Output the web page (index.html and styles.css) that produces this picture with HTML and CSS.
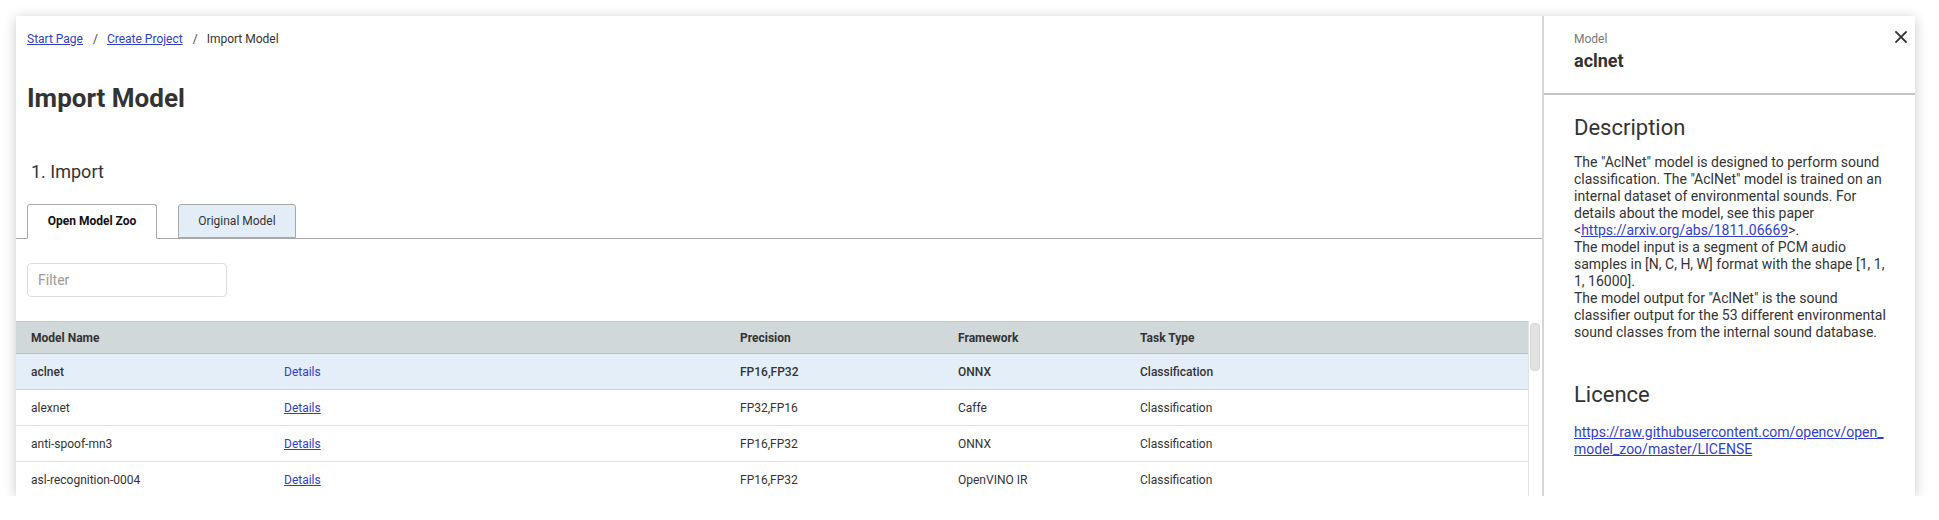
FILE: index.html
```html
<!DOCTYPE html>
<html lang="en">
<head>
<meta charset="utf-8">
<title>Import Model</title>
<link rel="stylesheet" href="styles.css">
</head>
<body>
<div class="card">
  <main class="main">
    <nav class="crumbs">
      <a href="#" class="link">Start Page</a><span class="sep">/</span><a href="#" class="link">Create Project</a><span class="sep">/</span><span class="current">Import Model</span>
    </nav>
    <h1 class="title">Import Model</h1>
    <h2 class="step">1. Import</h2>
    <div class="tabs">
      <div class="tab tab-active">Open Model Zoo</div>
      <div class="tab tab-inactive">Original Model</div>
    </div>
    <div class="filter-row">
      <input class="filter" type="text" placeholder="Filter">
    </div>
    <div class="table-wrap">
      <table class="models">
        <colgroup>
          <col class="c-name"><col class="c-details"><col class="c-prec"><col class="c-fw"><col class="c-task">
        </colgroup>
        <thead>
          <tr><th>Model Name</th><th></th><th>Precision</th><th>Framework</th><th>Task Type</th></tr>
        </thead>
        <tbody>
          <tr class="selected"><td>aclnet</td><td><a href="#" class="details plain">Details</a></td><td>FP16,FP32</td><td>ONNX</td><td>Classification</td></tr>
          <tr><td>alexnet</td><td><a href="#" class="details">Details</a></td><td>FP32,FP16</td><td>Caffe</td><td>Classification</td></tr>
          <tr><td>anti-spoof-mn3</td><td><a href="#" class="details">Details</a></td><td>FP16,FP32</td><td>ONNX</td><td>Classification</td></tr>
          <tr><td>asl-recognition-0004</td><td><a href="#" class="details">Details</a></td><td>FP16,FP32</td><td>OpenVINO IR</td><td>Classification</td></tr>
        </tbody>
      </table>
      <div class="scroll-track"><div class="scroll-thumb"></div></div>
    </div>
  </main>
  <aside class="panel">
    <header class="panel-head">
      <div class="panel-titles">
        <div class="panel-label">Model</div>
        <div class="panel-name">aclnet</div>
      </div>
      <svg class="close" width="12" height="12" viewBox="0 0 12 12" aria-label="Close">
        <path d="M1 1 L11 11 M11 1 L1 11" stroke="#333" stroke-width="1.8" stroke-linecap="square" fill="none"/>
      </svg>
    </header>
    <section class="panel-body">
      <h3 class="panel-h">Description</h3>
      <p class="panel-text">The "AclNet" model is designed to perform sound classification. The "AclNet" model is trained on an internal dataset of environmental sounds. For details about the model, see this paper &lt;<a href="#" class="link">https://arxiv.org/abs/1811.06669</a>&gt;.<br>The model input is a segment of PCM audio samples in [N, C, H, W] format with the shape [1, 1, 1, 16000].<br>The model output for "AclNet" is the sound classifier output for the 53 different environmental sound classes from the internal sound database.</p>
      <h3 class="panel-h licence-h">Licence</h3>
      <p class="panel-text"><a href="#" class="link breakall">https://raw.githubusercontent.com/opencv/open_model_zoo/master/LICENSE</a></p>
    </section>
  </aside>
</div>
</body>
</html>
```

FILE: styles.css
```css
* { box-sizing: border-box; }

html, body {
  margin: 0;
  padding: 0;
  background: #ffffff;
}

body {
  padding: 16px 24px 0 16px;
  font-family: Roboto, "Liberation Sans", Arial, sans-serif;
  color: #333;
}

.card {
  display: flex;
  width: 1899px;
  height: 480px;
  background: #fff;
  box-shadow: 0 2px 12px rgba(0, 0, 0, 0.22);
  overflow: hidden;
}

.main {
  flex: 1;
  min-width: 0;
  display: flex;
  flex-direction: column;
}

.link {
  color: #3140cc;
  text-decoration: underline;
}

.crumbs {
  margin: 16px 0 0 11px;
  font-size: 12px;
  line-height: 14px;
  color: #333;
  display: flex;
}

.sep {
  margin: 0 9px 0 10px;
  color: #444;
}

.title {
  margin: 36px 0 0 11px;
  font-size: 26px;
  line-height: 32px;
  font-weight: 700;
  color: #333;
}

.step {
  margin: 47px 0 0 15px;
  font-size: 18px;
  line-height: 22px;
  font-weight: 400;
  color: #333;
}

.tabs {
  margin-top: 21px;
  display: flex;
  gap: 21px;
  padding-left: 11px;
  border-bottom: 1px solid #a8a8a8;
  height: 35px;
}

.tab {
  height: 35px;
  font-size: 12px;
  line-height: 33px;
  border: 1px solid #a8a8a8;
  border-radius: 3px 3px 0 0;
  text-align: center;
}

.tab-active {
  background: #fff;
  font-weight: 700;
  color: #111;
  border-bottom-color: #fff;
  width: 130px;
}

.tab-inactive {
  background: #e3edf8;
  color: #333;
  height: 34px;
  width: 118px;
}

.filter-row {
  margin: 24px 0 0 11px;
}

.filter {
  width: 200px;
  height: 34px;
  border: 1px solid #dcdcdc;
  border-radius: 4px;
  padding: 0 10px;
  font-family: inherit;
  font-size: 14px;
  color: #333;
  outline: none;
}

.filter::placeholder {
  color: #9a9a9a;
}

.table-wrap {
  margin-top: 24px;
  display: flex;
  flex: 1;
  min-height: 0;
}

.models {
  width: 1512px;
  flex: none;
  border-collapse: collapse;
  table-layout: fixed;
  font-size: 12px;
  color: #333;
  align-self: flex-start;
}

.c-name { width: 253px; }
.c-details { width: 456px; }
.c-prec { width: 218px; }
.c-fw { width: 182px; }
.c-task { width: 403px; }

.models th {
  height: 32px;
  background: #d0d8da;
  border-top: 1px solid #c2c9cc;
  border-bottom: 1px solid #b7bfc3;
  text-align: left;
  font-weight: 700;
  padding: 0 0 0 15px;
  color: #333;
}

.models td {
  height: 36px;
  padding: 0 0 0 15px;
  border-bottom: 1px solid #e0e0e0;
  white-space: nowrap;
}

.models tr.selected td {
  background: #e4eef9;
  border-bottom-color: #c6d5e4;
  font-weight: 500;
}

.details {
  color: #3140cc;
  text-decoration: underline;
  font-weight: 400;
}

.details.plain {
  text-decoration: none;
}

.scroll-track {
  flex: 1;
  border-left: 1px solid #e2e2e2;
  padding: 2px 0 0 1px;
}

.scroll-thumb {
  width: 10px;
  height: 48px;
  border-radius: 4px;
  background: #e2e2e2;
  border: 1px solid #d6d6d6;
}

.panel {
  width: 373px;
  flex: none;
  border-left: 2px solid #d6d6d6;
  display: flex;
  flex-direction: column;
}

.panel-head {
  height: 79px;
  border-bottom: 2px solid #c4c4c4;
  display: flex;
  justify-content: space-between;
  align-items: flex-start;
  padding: 16px 8px 0 30px;
}

.panel-label {
  font-size: 12px;
  line-height: 14px;
  color: #777;
}

.panel-name {
  margin-top: 4px;
  font-size: 18px;
  line-height: 22px;
  font-weight: 700;
  color: #333;
}

.close {
  margin-top: -1px;
  display: block;
}

.panel-body {
  padding: 20px 29px 0 30px;
}

.panel-h {
  margin: 0;
  font-size: 22px;
  line-height: 26px;
  font-weight: 400;
  color: #333;
}

.panel-text {
  margin: 13px 0 0 0;
  font-size: 14px;
  line-height: 17px;
  color: #333;
}

.licence-h {
  margin-top: 41px;
}

.licence-h + .panel-text {
  margin-top: 16px;
}

.breakall {
  word-break: break-all;
}
```
